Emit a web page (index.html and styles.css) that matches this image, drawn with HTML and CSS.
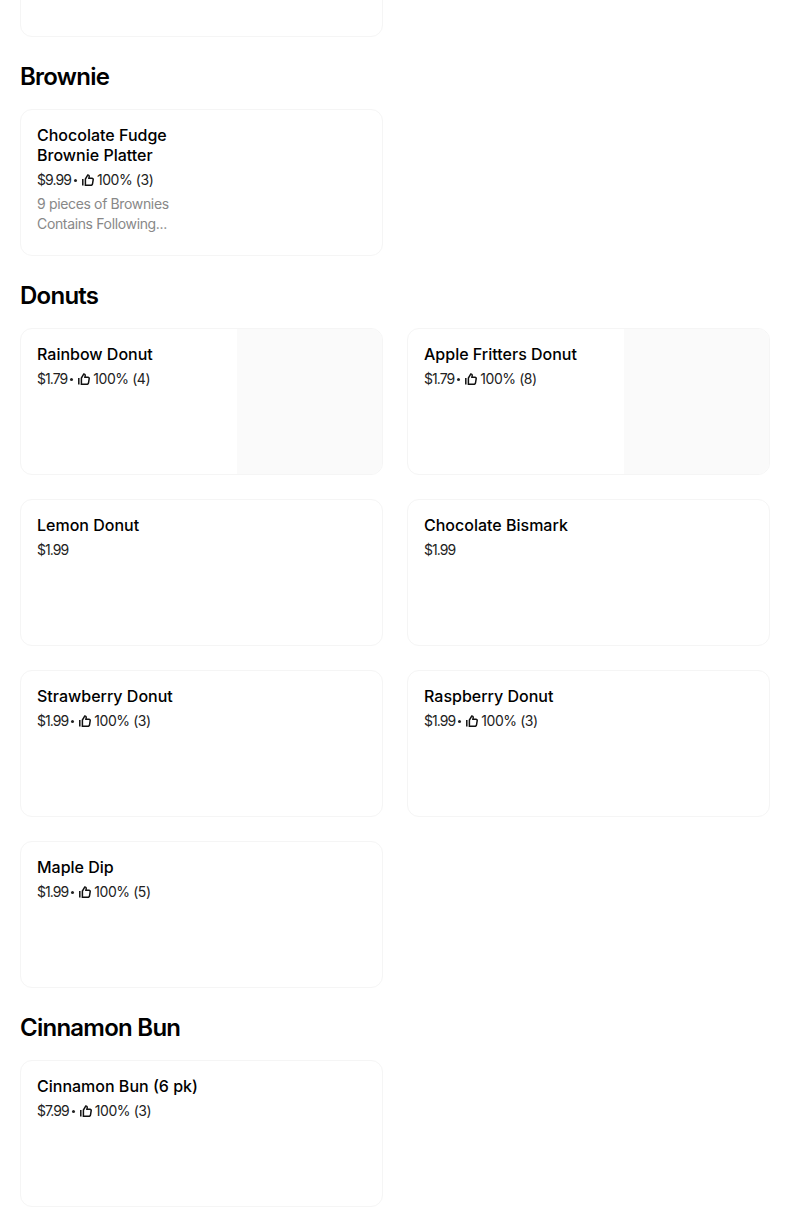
FILE: index.html
```html
<!DOCTYPE html>
<html lang="en">
<head>
<meta charset="utf-8">
<title>Menu</title>
<link rel="stylesheet" href="styles.css">
</head>
<body>
<svg class="sprite" aria-hidden="true"><symbol id="thumb" viewBox="0 0 12 12"><path d="M0.8 5v6.5M3.4 11.3V5L5.8 0.9c1 0 1.5 0.7 1.4 1.6L6.9 4.3h3.1c0.8 0 1.3 0.7 1.2 1.4l-0.7 4.2c-0.1 0.8-0.6 1.4-1.4 1.4z" fill="none" stroke="currentColor" stroke-width="1.5"/></symbol></svg>
<main class="menu">
  <section class="section">
    <div class="grid"><article class="card"><div class="info"></div><div class="media"></div></article></div>
  </section>
  <section class="section">
    <h2 class="heading">Brownie</h2>
    <div class="grid">
      <article class="card"><div class="info">
        <h3 class="name">Chocolate Fudge Brownie Platter</h3>
        <p class="meta"><span class="price">$9.99</span><span class="dot"></span><svg class="thumb"><use href="#thumb"/></svg><span class="rating">100% (3)</span></p>
        <p class="desc">9 pieces of Brownies Contains Following...</p>
      </div><div class="media"></div></article>
    </div>
  </section>
  <section class="section">
    <h2 class="heading">Donuts</h2>
    <div class="grid">
      <article class="card"><div class="info"><h3 class="name">Rainbow Donut</h3><p class="meta"><span class="price">$1.79</span><span class="dot"></span><svg class="thumb"><use href="#thumb"/></svg><span class="rating">100% (4)</span></p></div><div class="media media-tint"></div></article>
      <article class="card"><div class="info"><h3 class="name">Apple Fritters Donut</h3><p class="meta"><span class="price">$1.79</span><span class="dot"></span><svg class="thumb"><use href="#thumb"/></svg><span class="rating">100% (8)</span></p></div><div class="media media-tint"></div></article>
      <article class="card"><div class="info"><h3 class="name">Lemon Donut</h3><p class="meta"><span class="price">$1.99</span></p></div><div class="media"></div></article>
      <article class="card"><div class="info"><h3 class="name">Chocolate Bismark</h3><p class="meta"><span class="price">$1.99</span></p></div><div class="media"></div></article>
      <article class="card"><div class="info"><h3 class="name">Strawberry Donut</h3><p class="meta"><span class="price">$1.99</span><span class="dot"></span><svg class="thumb"><use href="#thumb"/></svg><span class="rating">100% (3)</span></p></div><div class="media"></div></article>
      <article class="card"><div class="info"><h3 class="name">Raspberry Donut</h3><p class="meta"><span class="price">$1.99</span><span class="dot"></span><svg class="thumb"><use href="#thumb"/></svg><span class="rating">100% (3)</span></p></div><div class="media"></div></article>
      <article class="card"><div class="info"><h3 class="name">Maple Dip</h3><p class="meta"><span class="price">$1.99</span><span class="dot"></span><svg class="thumb"><use href="#thumb"/></svg><span class="rating">100% (5)</span></p></div><div class="media"></div></article>
    </div>
  </section>
  <section class="section">
    <h2 class="heading">Cinnamon Bun</h2>
    <div class="grid">
      <article class="card"><div class="info"><h3 class="name">Cinnamon Bun (6 pk)</h3><p class="meta"><span class="price">$7.99</span><span class="dot"></span><svg class="thumb"><use href="#thumb"/></svg><span class="rating">100% (3)</span></p></div><div class="media"></div></article>
    </div>
  </section>
</main>
</body>
</html>
```
FILE: styles.css
```css
html, body { margin: 0; padding: 0; background: #fff; overflow: hidden; }
body { height: 1221px; font-family: Inter, "Liberation Sans", sans-serif; color: #000; }
.sprite { display: none; }
.menu { margin-top: -110px; padding: 0 34px 0 20px; display: flex; flex-direction: column; gap: 24px; }
.heading { margin: 0 0 16px; font-size: 24px; line-height: 32px; font-weight: 600; letter-spacing: -0.75px; }
.grid { display: grid; grid-template-columns: 363px 363px; gap: 24px; }
.card { box-sizing: border-box; height: 147px; display: flex; border: 1px solid #f5f5f5; border-radius: 12px; overflow: hidden; background: #fff; }
.info { flex: 1; min-width: 0; padding: 15px 16px 16px; }
.media { flex: none; width: 145px; }
.media-tint { background: #fafafa; }
.name { margin: 0; font-size: 16px; line-height: 20px; font-weight: 500; }
.meta { margin: 5px 0 0; display: flex; align-items: center; font-size: 14px; line-height: 20px; color: #222; white-space: nowrap; }
.price { letter-spacing: -0.95px; }
.dot { width: 3px; height: 3px; margin: 1px 5px 0 3px; background: #222; border-radius: 50%; }
.thumb { width: 12px; height: 12px; margin-right: 3px; color: #111; }
.rating { letter-spacing: -0.42px; }
.desc { margin: 4px 0 0; font-size: 14px; line-height: 20px; color: #888; letter-spacing: -0.35px; }
```
